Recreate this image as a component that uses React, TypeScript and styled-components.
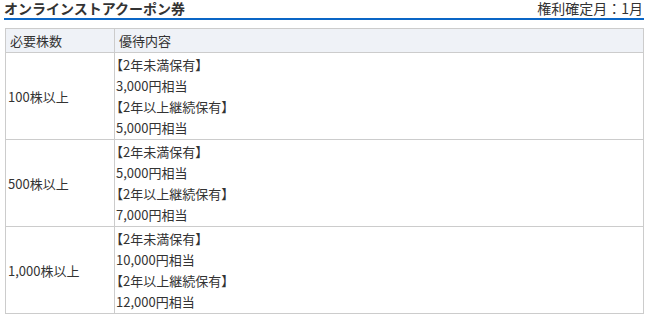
import React from "react";
import styled, { createGlobalStyle } from "styled-components";

const GlobalStyle = createGlobalStyle`
  body {
    margin: 0;
    background: #ffffff;
    font-family: "Noto Sans CJK JP", "Noto Sans", sans-serif;
    color: #333333;
  }
`;

const Wrapper = styled.div`
  width: 649px;
  display: flex;
  flex-direction: column;
`;

const TitleBar = styled.div`
  display: flex;
  justify-content: space-between;
  align-items: center;
  padding: 0 6px 0 4px;
  height: 16px;
`;

const Title = styled.h2`
  margin: 0;
  font-size: 14px;
  line-height: 16px;
  font-weight: bold;
  color: #333333;
`;

const RecordMonth = styled.span`
  font-size: 14px;
  line-height: 16px;
  color: #333333;
`;

const BlueRule = styled.div`
  height: 2px;
  margin: 2px 5px 0 4px;
  background: #0a66c6;
`;

const Table = styled.table`
  margin: 8px 5px 0 5px;
  width: 639px;
  table-layout: fixed;
  border-collapse: collapse;
  font-size: 13px;
  color: #333333;
`;

const Col = styled.col<{ $w?: number }>`
  width: ${(p) => (p.$w ? `${p.$w}px` : "auto")};
`;

const HeadCell = styled.th`
  background: #eff2f7;
  border: 1px solid #cccccc;
  font-weight: normal;
  text-align: left;
  height: 23px;
  line-height: 20px;
  padding: 0 4px;
`;

const Cell = styled.td<{ $pad?: number }>`
  border: 1px solid #cccccc;
  padding: 1px 0 1px ${(p) => p.$pad ?? 0}px;
  line-height: 21px;
  vertical-align: middle;
`;

const Line = styled.div<{ $bracket?: boolean }>`
  white-space: nowrap;
  margin-left: ${(p) => (p.$bracket ? "-6px" : "0")};
`;

const tiers = [
  { shares: "100株以上", under: "3,000円相当", over: "5,000円相当" },
  { shares: "500株以上", under: "5,000円相当", over: "7,000円相当" },
  { shares: "1,000株以上", under: "10,000円相当", over: "12,000円相当" },
];

export default function App() {
  return (
    <Wrapper>
      <GlobalStyle />
      <TitleBar>
        <Title>オンラインストアクーポン券</Title>
        <RecordMonth>権利確定月：1月</RecordMonth>
      </TitleBar>
      <BlueRule />
      <Table>
        <colgroup>
          <Col $w={109} />
          <Col />
        </colgroup>
        <thead>
          <tr>
            <HeadCell>必要株数</HeadCell>
            <HeadCell>優待内容</HeadCell>
          </tr>
        </thead>
        <tbody>
          {tiers.map((t) => (
            <tr key={t.shares}>
              <Cell $pad={2}>{t.shares}</Cell>
              <Cell $pad={1}>
                <Line $bracket>【2年未満保有】</Line>
                <Line>{t.under}</Line>
                <Line $bracket>【2年以上継続保有】</Line>
                <Line>{t.over}</Line>
              </Cell>
            </tr>
          ))}
        </tbody>
      </Table>
    </Wrapper>
  );
}
